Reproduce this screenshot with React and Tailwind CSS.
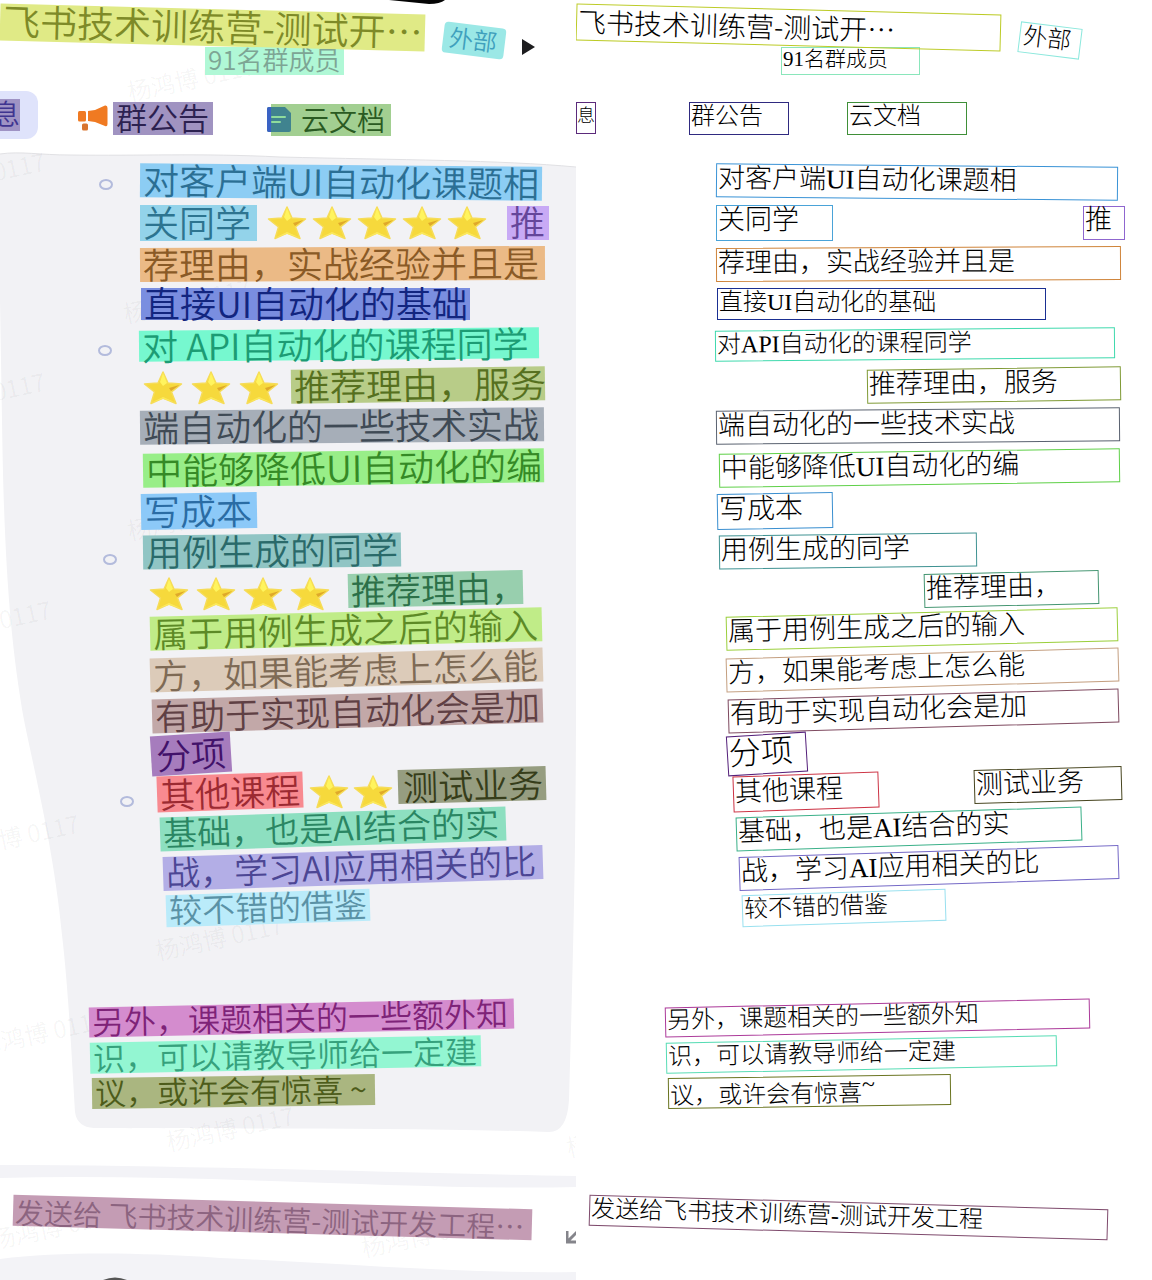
import React from "react";

const LABEL_FONT = "font-['Noto_Sans_CJK_SC',sans-serif] font-[350]";
const READ_FONT = "font-light text-black";
const READ_MIXED = "font-['Liberation_Serif','Noto_Sans_CJK_SC',serif]";
const READ_CJK = "font-['Noto_Sans_CJK_SC',sans-serif]";

/* One annotated text region. "fill" is the highlighted look, "line" the outlined look. */
const header = {
  title: { text: "飞书技术训练营-测试开…", cjk: true, box: "w-[425px] h-[37px] rotate-[1.5deg]", fill: "bg-[#e0ea86] text-[#7e8a28]", size: "text-[37px]", line: "border-[#bccb26]", read: "text-[28px]" },
  tag: { text: "外部", box: "ml-[18px] mt-[26px] w-[62px] h-[31px] rotate-[7deg] pl-[6px]", fill: "bg-[#9be8e6] text-[#3fa0bd] rounded", size: "text-[24px]", line: "border-[#8ce8dd]", read: "text-[24px] -ml-[4px]" },
  members: { text: "91名群成员", box: "ml-[205px] w-[139px] h-[28px]", fill: "bg-[#b0f8d6] text-[#7da594]", size: "text-[26px]", line: "border-[#8ae6bb]", read: "text-[21px]" },
};

const tabs = {
  messages: { text: "息", box: "w-[20px] h-[32px] justify-end", fill: "bg-[#9f93c4] text-[#3f3590]", size: "text-[28px]", line: "border-[#5b2a7b]", read: "text-[18px]" },
  notice: { text: "群公告", box: "ml-[5px] w-[100px] h-[33px]", fill: "bg-[#a093c1] text-[#2c2150]", size: "text-[31px]", line: "border-[#2f2a80]", read: "text-[24px]" },
  docs: { text: "云文档", box: "w-[120px] h-[33px]", fill: "bg-[#a2cf91] text-[#2a5a22]", size: "text-[28px]", line: "border-[#3f8f38]", read: "text-[24px]" },
};

const rows = [
  { h: "h-[41px]", items: [
    { dot: "ml-[99px] mt-[5px]" },
    { text: "对客户端UI自动化课题相", box: "ml-[27px] w-[402px] h-[34px] rotate-[0.5deg]", fill: "bg-[#8ccdf4] text-[#2b6f94]", size: "text-[36px]", line: "border-[#3a93d6]", read: "text-[27px]" },
  ] },
  { h: "h-[41px]", items: [
    { text: "关同学", box: "ml-[140px] w-[117px] h-[36px]", fill: "bg-[#93d3ea] text-[#2d7490]", size: "text-[36px]", line: "border-[#4aa3d8]", read: "text-[27px]" },
    { stars: 5, at: "ml-[10px] gap-[5px]" },
    { text: "推", box: "ml-[20px] w-[42px] h-[34px]", fill: "bg-[#c8aaf5] text-[#65469a]", size: "text-[35px]", line: "border-[#8f66cf]", read: "text-[27px]" },
  ] },
  { h: "h-[41px]", items: [
    { text: "荐理由，实战经验并且是", box: "ml-[140px] w-[405px] h-[34px] rotate-[-0.3deg]", fill: "bg-[#ebba86] text-[#8a5a26]", size: "text-[36px]", line: "border-[#cf843a]", read: "text-[27px]" },
  ] },
  { h: "h-[40px]", items: [
    { text: "直接UI自动化的基础", box: "ml-[141px] w-[329px] h-[32px]", fill: "bg-[#7a8ee0] text-[#12257f]", size: "text-[36px]", line: "border-[#1a2f92]", read: "text-[24px]" },
  ] },
  { h: "h-[40px]", items: [
    { dot: "ml-[98px] mt-[12px]" },
    { text: "对 API自动化的课程同学", readText: "对API自动化的课程同学", box: "ml-[27px] w-[400px] h-[31px] rotate-[-0.5deg]", fill: "bg-[#76f8cf] text-[#1c9c74]", size: "text-[36px]", line: "border-[#3fd9ad]", read: "text-[24px]" },
  ] },
  { h: "h-[41px]", items: [
    { stars: 3, at: "ml-[143px] mt-[6px] gap-[8px]" },
    { text: "推荐理由，服务", box: "ml-[12px] w-[254px] h-[34px] rotate-[-0.8deg]", fill: "bg-[#b8cc88] text-[#56701f]", size: "text-[36px]", line: "border-[#7f9a35]", read: "text-[27px]" },
  ] },
  { h: "h-[41px]", items: [
    { text: "端自动化的一些技术实战", box: "ml-[140px] w-[404px] h-[34px] rotate-[-0.5deg]", fill: "bg-[#a6aeb8] text-[#3f4a55]", size: "text-[36px]", line: "border-[#5a6270]", read: "text-[27px]" },
  ] },
  { h: "h-[43px]", items: [
    { text: "中能够降低UI自动化的编", box: "ml-[143px] w-[401px] h-[34px] rotate-[-0.8deg]", fill: "bg-[#98ee88] text-[#358a26]", size: "text-[36px]", line: "border-[#5fd048]", read: "text-[27px]" },
  ] },
  { h: "h-[43px]", items: [
    { text: "写成本", box: "ml-[141px] w-[116px] h-[36px] rotate-[-1deg]", fill: "bg-[#8cc9f8] text-[#2a6ca4]", size: "text-[36px]", line: "border-[#3a8fd0]", read: "text-[28px]" },
  ] },
  { h: "h-[38px]", items: [
    { dot: "ml-[103px] mt-[16px]" },
    { text: "用例生成的同学", box: "ml-[26px] w-[258px] h-[34px] rotate-[-0.7deg]", fill: "bg-[#90c5c4] text-[#2a6a6a]", size: "text-[36px]", line: "border-[#3f9292]", read: "text-[27px]" },
  ] },
  { h: "h-[38px]", items: [
    { stars: 4, at: "ml-[149px] mt-[9px] gap-[7px]" },
    { text: "推荐理由，", box: "ml-[18px] w-[175px] h-[34px] rotate-[-1.3deg]", fill: "bg-[#98cfae] text-[#2c7048]", size: "text-[35px]", line: "border-[#459672]", read: "text-[27px]" },
  ] },
  { h: "h-[42px]", items: [
    { text: "属于用例生成之后的输入", box: "ml-[150px] w-[392px] h-[34px] rotate-[-1.4deg]", fill: "bg-[#c0ec88] text-[#5d8a26]", size: "text-[35px]", line: "border-[#9bcf3c]", read: "text-[27px]" },
  ] },
  { h: "h-[40px]", items: [
    { text: "方，如果能考虑上怎么能", box: "ml-[150px] w-[393px] h-[34px] rotate-[-1.6deg]", fill: "bg-[#dccbb9] text-[#7e6a55]", size: "text-[35px]", line: "border-[#c49f80]", read: "text-[27px]" },
  ] },
  { h: "h-[41px]", items: [
    { text: "有助于实现自动化会是加", box: "ml-[152px] w-[391px] h-[34px] rotate-[-1.6deg]", fill: "bg-[#c2a8a8] text-[#5f4044]", size: "text-[35px]", line: "border-[#7f4a60]", read: "text-[27px]" },
  ] },
  { h: "h-[46px]", items: [
    { text: "分项", box: "ml-[151px] w-[80px] h-[40px] rotate-[-3.5deg] pl-[5px]", fill: "bg-[#a67cbd] text-[#42126a]", size: "text-[35px]", line: "border-[#54207a]", read: "text-[32px] -ml-[5px]" },
  ] },
  { h: "h-[30px]", items: [
    { dot: "ml-[120px] mt-[18px]" },
    { text: "其他课程", box: "ml-[23px] w-[146px] h-[36px] rotate-[-2deg]", fill: "bg-[#f88a90] text-[#9c2a32]", size: "text-[35px]", line: "border-[#cc3344]", read: "text-[27px]" },
    { stars: 2, at: "ml-[6px] gap-[4px]" },
    { text: "测试业务", box: "ml-[5px] mb-[14px] w-[148px] h-[34px] rotate-[-1.6deg] pl-[5px]", fill: "bg-[#969d80] text-[#363d1a]", size: "text-[35px]", line: "border-[#47451f]", read: "text-[27px] -ml-[5px]" },
  ] },
  { h: "h-[43px]", items: [
    { text: "基础，也是AI结合的实", box: "ml-[160px] w-[346px] h-[34px] rotate-[-1.8deg]", fill: "bg-[#8ddfc0] text-[#2a8663]", size: "text-[34px]", line: "border-[#3ab088]", read: "text-[27px]" },
  ] },
  { h: "h-[36px]", items: [
    { text: "战，学习AI应用相关的比", box: "ml-[163px] w-[380px] h-[34px] rotate-[-1.8deg]", fill: "bg-[#b3aee6] text-[#4c4694]", size: "text-[34px]", line: "border-[#7468c6]", read: "text-[27px]" },
  ] },
  { h: "h-[44px]", items: [
    { text: "较不错的借鉴", box: "ml-[166px] w-[204px] h-[32px] rotate-[-1.8deg]", fill: "bg-[#baebfa] text-[#5a92a6]", size: "text-[33px]", line: "border-[#98e0ef]", read: "text-[24px]" },
  ] },
];

const closing = [
  { h: "h-[36px]", items: [
    { text: "另外，课题相关的一些额外知", box: "ml-[89px] w-[425px] h-[30px] rotate-[-1.2deg]", fill: "bg-[#d48cce] text-[#7e2378]", size: "text-[32px]", line: "border-[#ac3a9a]", read: "text-[24px]" },
  ] },
  { h: "h-[37px]", items: [
    { text: "识，可以请教导师给一定建", box: "ml-[90px] w-[391px] h-[31px] rotate-[-1.1deg]", fill: "bg-[#93f6d2] text-[#36a17c]", size: "text-[32px]", line: "border-[#56dcb4]", read: "text-[24px]" },
  ] },
  { h: "h-[37px]", items: [
    { text: "议，或许会有惊喜 ~", readText: "议，或许会有惊喜", readTail: "~", box: "ml-[92px] w-[283px] h-[31px] rotate-[-0.8deg]", fill: "bg-[#aab680] text-[#4d5c1a]", size: "text-[31px]", line: "border-[#6a7420]", read: "text-[24px]" },
  ] },
];

const draft = { text: "发送给飞书技术训练营-测试开发工程", box: "ml-[13px] w-[519px] h-[31px] rotate-[1.6deg]", line: "border-[#7e4a6c]", read: "text-[24px]" };

function Region({ item, outlined }) {
  return outlined ? (
    <div className={`flex shrink-0 items-center whitespace-nowrap border ${item.box} ${item.line}`}>
      <span className={`pb-1 pl-px leading-none ${READ_FONT} ${item.cjk ? READ_CJK : READ_MIXED} ${item.read}`}>
        {item.readText || item.text}
        {item.readTail && <span className="align-super">{item.readTail}</span>}
      </span>
    </div>
  ) : (
    <div className={`flex shrink-0 items-center whitespace-nowrap pl-[3px] ${LABEL_FONT} ${item.box} ${item.fill}`}>
      <span className={`pb-1 leading-none ${item.size}`}>{item.text}</span>
    </div>
  );
}

function Star() {
  return (
    <svg viewBox="0 0 40 34" className="h-[34px] w-[40px] shrink-0" aria-hidden="true">
      <path d="M20 1 L25 12 L38.500 13 L28.500 21 L33 32.500 L20 27 L8 32.500 L11.500 21 L1.500 13 L15 12Z" fill="#f6d93c" stroke="#f6dc58" strokeWidth="1.500" strokeLinejoin="round" />
      <path d="M20 2 L24 12 L20 15 L17 11Z" fill="#fff45e" />
      <path d="M26 17 L36.500 14 L28 20Z" fill="#dfa92a" />
      <path d="M10 31 L20 26 L31 31 L20 28Z" fill="#fbe95a" />
    </svg>
  );
}

function Row({ row, outlined }) {
  return (
    <li className={`flex items-center ${row.h}`}>
      {row.items.map((item, i) => {
        if (item.dot)
          return (
            <span key={i} className={`h-[11px] w-[14px] shrink-0 rounded-[50%] border-2 border-[#b3bbdc] ${item.dot} ${outlined ? "invisible" : ""}`} />
          );
        if (item.stars)
          return (
            <span key={i} className={`flex shrink-0 ${item.at} ${outlined ? "invisible" : ""}`}>
              {Array.from({ length: item.stars }, (_, n) => <Star key={n} />)}
            </span>
          );
        return <Region key={i} item={item} outlined={outlined} />;
      })}
    </li>
  );
}

function Megaphone() {
  return (
    <svg viewBox="0 0 30 26" className="h-[26px] w-[30px]" aria-hidden="true">
      <path d="M10 6 L17 5 L27 .5 Q29.500 0 29.500 3 V19 Q29.500 22 27 21 L17 17 L10 16Z" fill="#f07a22" />
      <rect x="0" y="6" width="8" height="10.500" rx="1.500" fill="#f07a22" />
      <rect x="4" y="18.500" width="6" height="7" rx="1.500" fill="#d9752f" />
    </svg>
  );
}

function DocIcon() {
  return (
    <svg viewBox="0 0 24 25" className="h-[25px] w-[24px]" aria-hidden="true">
      <path d="M2 0 H18 L24 6 V23 Q24 25 22 25 H2 Q0 25 0 23 V2 Q0 0 2 0Z" fill="#40838f" />
      <path d="M4 0 H2 Q0 0 0 2 V23 Q0 25 2 25 H4Z" fill="#3a62c4" />
      <path d="M5 10 H18 M5 15 H13" stroke="#8fdc9c" strokeWidth="2" strokeLinecap="round" />
    </svg>
  );
}

function Backdrop() {
  return (
    <svg viewBox="0 0 576 1280" preserveAspectRatio="none" className="absolute inset-0 h-full w-full" aria-hidden="true">
      <path d="M0 154 C20 151 40 155 70 155 C140 156 200 153 280 157 C400 160 500 160 576 167 V700 C576 850 573 960 569 1100 Q567 1133 548 1132 C400 1127 200 1129 94 1128 Q77 1127 75 1112 C72 1060 68 985 62 935 C54 850 34 770 24 720 C10 640 4 560 2 420 L0 300Z" fill="#f2f2f5" />
      <path d="M0 154 C20 151 40 155 70 155 C140 156 200 153 280 157 C400 160 500 160 576 167" fill="none" stroke="#e1e1e4" />
      <path d="M0 1165 C180 1165 400 1173 576 1176 V1187 C420 1191 200 1173 0 1178Z" fill="#f3f3f7" />
      <path d="M0 1259 C60 1252 130 1252 220 1258 C340 1263 460 1274 576 1272 V1280 H0Z" fill="#f3f3f7" />
      <path d="M103 1280 Q115 1275 127 1280Z" fill="#555" />
      <path d="M389 0 H445 Q440 4 429 4Z" fill="#050505" />
    </svg>
  );
}

const marks = [
  "left-[126px] top-[66px]", "-left-[84px] top-[162px]", "left-[122px] top-[288px]", "-left-[84px] top-[382px]",
  "left-[126px] top-[505px]", "-left-[78px] top-[610px]", "-left-[50px] top-[824px]",
  "left-[154px] top-[925px]", "-left-[24px] top-[1020px]", "left-[165px] top-[1116px]", "-left-[10px] top-[1214px]",
  "left-[360px] top-[1222px]", "left-[565px] top-[1122px]",
];

function Watermarks() {
  return (
    <div className="pointer-events-none absolute inset-0 overflow-hidden">
      {marks.map((m) => (
        <span key={m} className={`absolute whitespace-nowrap text-[24px] leading-none text-black/5 rotate-[-12deg] ${LABEL_FONT} ${m}`}>杨鸿博 0117</span>
      ))}
    </div>
  );
}

function Panel({ outlined }) {
  return (
    <section className="relative min-w-0 overflow-hidden bg-white">
      {!outlined && <Backdrop />}
      {!outlined && <Watermarks />}
      <div className="relative">
        <header>
          <div className="flex h-[55px] items-center">
            <Region item={header.title} outlined={outlined} />
            <Region item={header.tag} outlined={outlined} />
            {!outlined && (
              <button type="button" aria-label="展开" className="ml-[17px] mt-[38px]">
                <svg viewBox="0 0 13 16" className="h-[16px] w-[13px]"><path d="M0 0 L13 8 L0 16Z" fill="#1d1d1f" /></svg>
              </button>
            )}
          </div>
          <div className="-mt-2 flex h-[28px] items-center">
            <Region item={header.members} outlined={outlined} />
          </div>
        </header>
        <nav className="flex h-[86px] items-center">
          {outlined ? (
            <>
              <Region item={tabs.messages} outlined />
              <span className="w-[88px]" />
              <Region item={tabs.notice} outlined />
              <span className="w-[58px]" />
              <Region item={tabs.docs} outlined />
            </>
          ) : (
            <>
              <button type="button" className="mb-[6px] flex h-[48px] w-[38px] items-center overflow-hidden rounded-r-xl bg-[#dfe3fb]">
                <Region item={tabs.messages} />
              </button>
              <button type="button" className="ml-[40px] flex items-center">
                <Megaphone />
                <Region item={tabs.notice} />
              </button>
              <button type="button" className={`ml-[58px] mt-[3px] flex h-[32px] w-[120px] items-center whitespace-nowrap ${LABEL_FONT} ${tabs.docs.fill}`}>
                <span className="-ml-1 mr-[10px]"><DocIcon /></span>
                <span className={`pb-px leading-none ${tabs.docs.size}`}>{tabs.docs.text}</span>
              </button>
            </>
          )}
        </nav>
        <ul>
          {rows.map((row, i) => <Row key={i} row={row} outlined={outlined} />)}
        </ul>
        <ul className="mt-[70px]">
          {closing.map((row, i) => <Row key={i} row={row} outlined={outlined} />)}
        </ul>
        <footer className="mt-[92px] flex h-[78px] items-start">
          {outlined ? (
            <Region item={draft} outlined />
          ) : (
            <>
              <input
                type="text"
                aria-label="消息"
                placeholder="发送给 飞书技术训练营-测试开发工程…"
                className={`ml-[13px] h-[31px] w-[519px] shrink-0 rotate-[1.6deg] bg-[#c49cb4] pl-[2px] text-[29px] leading-none placeholder:text-[#8c6480] placeholder:opacity-100 ${LABEL_FONT}`}
              />
              <button type="button" aria-label="放大" className="ml-[34px] mt-[28px] shrink-0">
                <svg viewBox="0 0 16 14" className="h-[14px] w-[16px]"><path d="M1 1 V12 H12 M2 11 L12 1" fill="none" stroke="#85858b" strokeWidth="3" /></svg>
              </button>
            </>
          )}
        </footer>
      </div>
    </section>
  );
}

export default function App() {
  return (
    <main lang="zh-CN" className="grid grid-cols-2 bg-white">
      <Panel />
      <Panel outlined />
    </main>
  );
}
